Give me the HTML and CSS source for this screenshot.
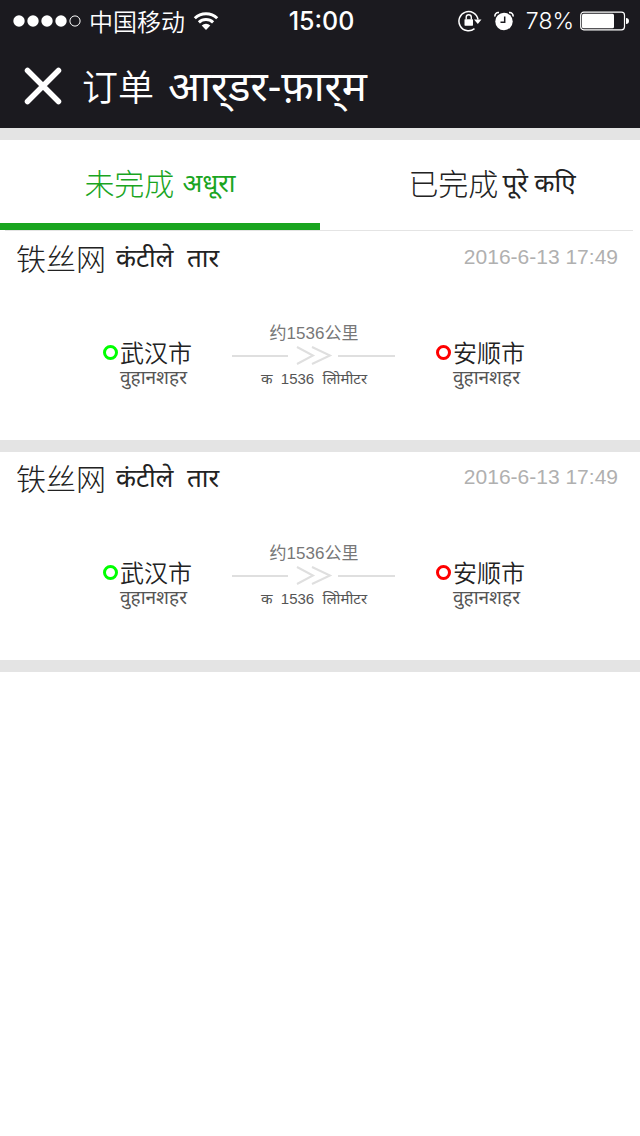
FILE: index.html
```html
<!DOCTYPE html>
<html lang="zh-CN">
<head>
<meta charset="utf-8">
<meta name="viewport" content="width=device-width, initial-scale=1">
<title>订单</title>
<link rel="stylesheet" href="styles.css">
</head>
<body>
<header class="top">
  <div class="status">
    <div class="status-left">
      <svg class="signal" viewBox="0 0 68 12" width="68" height="12" aria-hidden="true">
        <g fill="#fff"><circle cx="6" cy="6" r="5.7"/><circle cx="20" cy="6" r="5.7"/><circle cx="34" cy="6" r="5.7"/><circle cx="48" cy="6" r="5.7"/></g>
        <circle cx="62" cy="6" r="5.1" fill="none" stroke="#fff" stroke-width="1"/>
      </svg>
      <span class="carrier">中国移动</span>
      <svg class="wifi" viewBox="0 0 26 20" width="26" height="20" aria-hidden="true">
        <g fill="none" stroke="#fff" stroke-width="3"><path d="M1.8 7.2a16 16 0 0 1 22.4 0"/><path d="M5.9 11.4a10.2 10.2 0 0 1 14.2 0"/></g>
        <path d="M13 19l-4.300-4.400a6.200 6.200 0 0 1 8.600 0z" fill="#fff"/>
      </svg>
    </div>
    <time class="clock">15:00</time>
    <div class="status-right">
      <svg viewBox="0 0 24 22" width="24" height="22" aria-hidden="true">
        <path d="M16.500 18.700A9.600 9.600 0 1 1 20 9.500" fill="none" stroke="#fff" stroke-width="1.500"/>
        <path d="M16 9.500h7.500l-3.700 4.500z" fill="#fff"/>
        <rect x="6.500" y="9.200" width="8.500" height="6.500" rx=".6" fill="#fff"/>
        <path d="M8.200 9.500V7.300a2.550 2.550 0 0 1 5.100 0v2.200" fill="none" stroke="#fff" stroke-width="1.400"/>
      </svg>
      <svg class="alarm" viewBox="0 0 20 20" width="20" height="20" aria-hidden="true">
        <circle cx="10" cy="10.500" r="8.700" fill="#fff"/>
        <path d="M1 5.500C.6 3 2.500 1.200 5 1.600M19 5.500C19.400 3 17.500 1.200 15 1.600" fill="none" stroke="#fff" stroke-width="1.600"/>
        <path d="M10.700 5.500v5.700H6.500" fill="none" stroke="#1b1a1f" stroke-width="1.500"/>
      </svg>
      <span class="percent">78%</span>
      <svg viewBox="0 0 50 20" width="50" height="20" aria-hidden="true">
        <rect x=".7" y="1.200" width="43.800" height="17.600" rx="3" fill="none" stroke="#fff" stroke-width="1.200"/>
        <rect x="2" y="2.700" width="32" height="14.600" rx="1.500" fill="#fff"/>
        <path d="M46 7c1.800 0 3 1 3 3s-1.200 3-3 3z" fill="#fff"/>
      </svg>
    </div>
  </div>
  <div class="titlebar">
    <button class="close" type="button" aria-label="关闭">
      <svg viewBox="0 0 38 38" width="38" height="38" aria-hidden="true"><path d="M3.500 3.500l31 31M34.500 3.500l-31 31" stroke="#fff" stroke-width="5.500" stroke-linecap="round"/></svg>
    </button>
    <h1 class="title">订单 <span class="title-hi" lang="hi">आर्&zwnj;डर-फ़ार्&zwnj;म</span></h1>
  </div>
</header>
<main>
  <nav class="tabs">
    <a class="tab tab-active" href="#open" aria-current="page">未完成 <span class="tab-hi" lang="hi">अधूरा</span></a>
    <a class="tab tab-done" href="#done">已完成 <span class="tab-hi" lang="hi">पूरे कएि</span></a>
  </nav>
  <hr class="divider">
  <article class="order">
    <header class="order-head">
      <h2 class="goods">铁丝网 <span class="goods-hi" lang="hi">कंटीले&nbsp; तार</span></h2>
      <time class="date">2016-6-13 17:49</time>
    </header>
    <div class="route">
      <div class="city">
        <span class="ring ring-from"></span>
        <span class="city-name">武汉市</span>
        <span class="city-hi" lang="hi">वुहानशहर</span>
      </div>
      <div class="distance">
        <span class="km">约1536公里</span>
        <svg class="arrow" viewBox="0 0 164 20" width="164" height="20" aria-hidden="true"><path d="M0 10h56M106 10h57M65 1l16 8.500-16 8.500M80 1l18 8.500-18 8.500" fill="none" stroke="#dfdfdf" stroke-width="2"/></svg>
        <span class="km-hi" lang="hi">क&nbsp; 1536&nbsp; लिोमीटर</span>
      </div>
      <div class="city">
        <span class="ring ring-to"></span>
        <span class="city-name">安顺市</span>
        <span class="city-hi" lang="hi">वुहानशहर</span>
      </div>
    </div>
  </article>
  <article class="order">
    <header class="order-head">
      <h2 class="goods">铁丝网 <span class="goods-hi" lang="hi">कंटीले&nbsp; तार</span></h2>
      <time class="date">2016-6-13 17:49</time>
    </header>
    <div class="route">
      <div class="city">
        <span class="ring ring-from"></span>
        <span class="city-name">武汉市</span>
        <span class="city-hi" lang="hi">वुहानशहर</span>
      </div>
      <div class="distance">
        <span class="km">约1536公里</span>
        <svg class="arrow" viewBox="0 0 164 20" width="164" height="20" aria-hidden="true"><path d="M0 10h56M106 10h57M65 1l16 8.500-16 8.500M80 1l18 8.500-18 8.500" fill="none" stroke="#dfdfdf" stroke-width="2"/></svg>
        <span class="km-hi" lang="hi">क&nbsp; 1536&nbsp; लिोमीटर</span>
      </div>
      <div class="city">
        <span class="ring ring-to"></span>
        <span class="city-name">安顺市</span>
        <span class="city-hi" lang="hi">वुहानशहर</span>
      </div>
    </div>
  </article>
</main>
</body>
</html>
```
FILE: styles.css
```css
* { box-sizing: border-box; }
body {
  margin: 0;
  background: #fff;
  color: #222;
  font-family: "Noto Sans CJK SC", "Noto Sans", sans-serif;
  font-weight: 300;
}
svg { display: block; flex: none; }
h1, h2 { margin: 0; font-weight: 300; }

.top { background: #1b1a1f; color: #fff; }
.status {
  display: grid;
  grid-template-columns: 1fr auto 1fr;
  align-items: center;
  height: 41px;
  padding: 0 10px 0 13px;
}
.status-left, .status-right { display: flex; align-items: center; }
.status-left { gap: 8px; }
.carrier { font-size: 24px; line-height: 38px; font-weight: 350; }
.status-right { justify-content: flex-end; gap: 6px; }
.alarm { margin: 0 6px; }
.clock { font: 500 25px/40px Inter, sans-serif; }
.percent { font: 300 23px/40px Inter, sans-serif; }
.titlebar { display: flex; align-items: center; gap: 20px; height: 87px; padding: 2px 24px 0; }
.close { padding: 0; border: 0; background: none; }
.title { display: flex; align-items: center; gap: 14px; padding-bottom: 2px; font-size: 36px; line-height: 48px; font-weight: 350; }
.title-hi { font-family: "Noto Sans", sans-serif; font-size: 42px; font-weight: 400; }

.tabs { display: flex; border-top: 12px solid #e4e4e4; }
.tab {
  width: 50%;
  display: flex;
  justify-content: center;
  align-items: center;
  gap: 8px;
  height: 90px;
  border-bottom: 7px solid transparent;
  color: #222;
  font-size: 30px;
  line-height: 48px;
  text-decoration: none;
}
.tab-active { color: #1aa51f; border-bottom-color: #1aa51f; }
.tab-done { gap: 4px; padding-left: 24px; }
.tab-hi { font-family: "Noto Sans", sans-serif; font-size: 26px; font-weight: 400; }
.divider { height: 1px; margin: 0 7px 1px 5px; border: 0; background: #e4e4e4; }

.order { min-height: 220px; border-bottom: 12px solid #e4e4e4; }
.order-head { display: flex; justify-content: space-between; align-items: center; padding: 0 22px 0 16px; }
.goods { display: flex; align-items: center; gap: 10px; font-size: 30px; line-height: 48px; }
.goods-hi { font-family: "Noto Sans", sans-serif; font-size: 26px; font-weight: 400; }
.date { color: #b0b0b0; font: 400 21px/50px "Liberation Sans", sans-serif; }

.route { display: flex; justify-content: center; gap: 40px; padding: 40px 12px 0 0; }
.city { display: grid; grid-template-columns: 16px auto; column-gap: 1px; align-items: center; align-content: start; padding-top: 14px; }
.city-name { font-size: 24px; line-height: 32px; font-weight: 350; }
.city-hi { grid-column: 2; font-family: "Noto Sans", sans-serif; font-size: 19px; line-height: 18px; font-weight: 400; color: #555; }
.ring { width: 15px; height: 15px; border: 3px solid; border-radius: 50%; }
.ring-from { border-color: #0f0; }
.ring-to { border-color: #f00; }
.distance { display: flex; flex-direction: column; align-items: center; }
.km { font-family: "Liberation Sans", "Noto Sans CJK SC", sans-serif; font-size: 17px; line-height: 24px; font-weight: 400; color: #777; }
.km-hi { font-family: "Liberation Sans", "Noto Sans", sans-serif; font-size: 15px; line-height: 26px; font-weight: 400; color: #555; }
```
